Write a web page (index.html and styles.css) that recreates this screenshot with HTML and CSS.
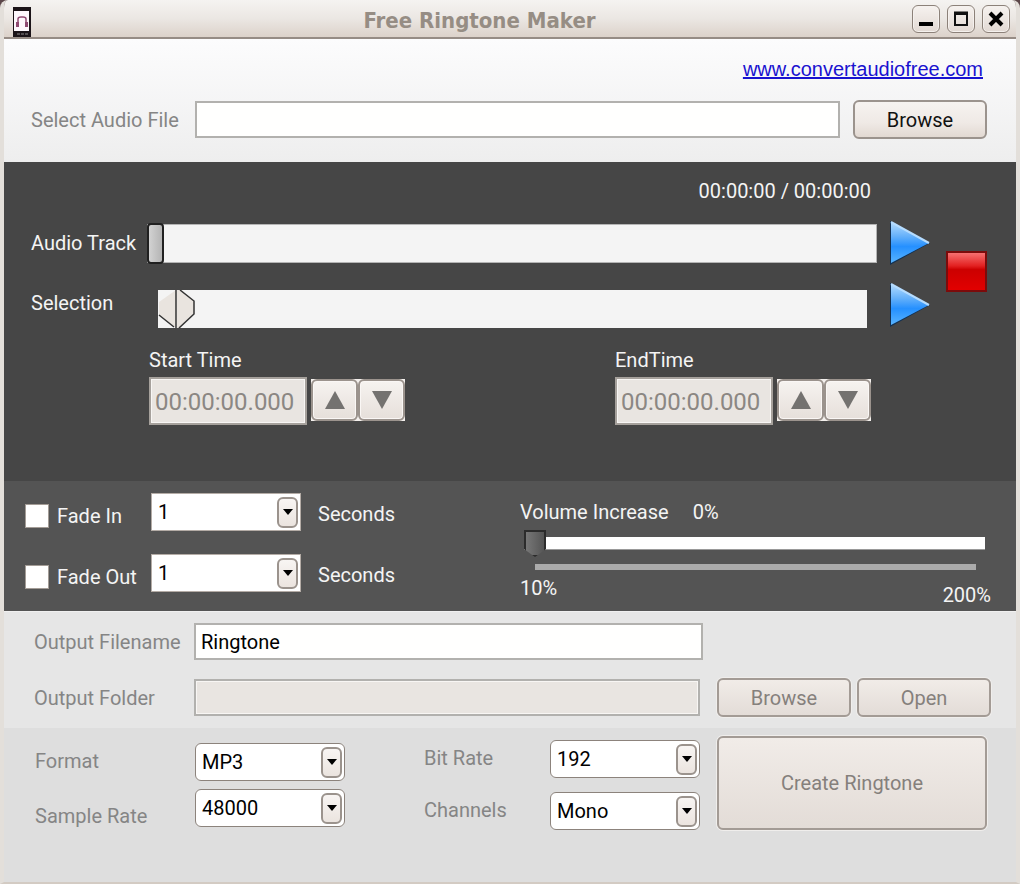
FILE: index.html
```html
<!DOCTYPE html>
<html lang="en">
<head>
    <meta charset="UTF-8">
    <meta name="viewport" content="width=device-width, initial-scale=1.0">
    <title>Free Ringtone Maker</title>
    <link rel="stylesheet" href="styles.css">
</head>
<body>
    <div class="window">
        <header class="titlebar">
            <svg class="app-icon" width="20" height="30" viewBox="0 0 20 30">
                <rect x="0" y="0" width="18" height="30" fill="#1b1418"/>
                <rect x="1" y="4" width="15" height="20" fill="#fdf7fc"/>
                <path d="M5 18 V12 Q5 10 8 10 H10 Q13 10 13 12 V18" fill="none" stroke="#8f4a72" stroke-width="1.5"/>
                <path d="M3 15h3v5h-3zM12 15h3v5h-3z" fill="#8f4a72"/>
                <path d="M4 27h3M8 27h3M12 27h3" stroke="#8d8a8b" stroke-width="1"/>
            </svg>
            <h1>Free Ringtone Maker</h1>
            <div class="window-buttons">
                <button type="button" aria-label="Minimize">
                    <svg width="16" height="16" viewBox="0 0 16 16"><path d="M1 13h14" stroke="#000" stroke-width="4"/></svg>
                </button>
                <button type="button" aria-label="Maximize">
                    <svg width="16" height="16" viewBox="0 0 16 16"><path d="M2 3h12v11h-12z" fill="none" stroke="#111" stroke-width="2"/><path d="M1 2h14" stroke="#111" stroke-width="3"/></svg>
                </button>
                <button type="button" aria-label="Close">
                    <svg width="16" height="16" viewBox="0 0 16 16"><path d="M2 2L14 14M14 2L2 14" stroke="#000" stroke-width="4"/></svg>
                </button>
            </div>
        </header>

        <!-- Source file -->
        <section class="source">
            <a class="site-link" href="#">www.convertaudiofree.com</a>
            <div class="source-row">
                <label for="audioFile">Select Audio File</label>
                <input type="text" id="audioFile" class="textbox">
                <button type="button" class="btn">Browse</button>
            </div>
        </section>

        <!-- Player -->
        <section class="player">
            <p class="position">00:00:00 / 00:00:00</p>
            <div class="tracks">
                <div class="track-list">
                    <div class="track-row">
                        <label for="audioTrack">Audio Track</label>
                        <input type="range" id="audioTrack" class="seek" min="0" max="100" value="0">
                        <button type="button" class="play" aria-label="Play track">
                            <svg width="42" height="46" viewBox="0 0 42 46">
                                <defs>
                                    <linearGradient id="blue" x1="0" y1="0" x2="0" y2="1">
                                        <stop offset="0" stop-color="#b4dcff"/>
                                        <stop offset="0.35" stop-color="#64b0fa"/>
                                        <stop offset="0.6" stop-color="#2590ff"/>
                                        <stop offset="1" stop-color="#58b4ff"/>
                                    </linearGradient>
                                </defs>
                                <path d="M1 1L41 23L1 45z" fill="#123052"/>
                                <path d="M2 2L40 23L2 43z" fill="url(#blue)"/>
                                <path d="M2 2L40 23" stroke="#b5dcff" stroke-width="2"/>
                            </svg>
                        </button>
                    </div>
                    <div class="track-row selection-row">
                        <label for="selStart">Selection</label>
                        <div class="selection">
                            <input type="range" id="selStart" class="sel-start" min="0" max="100" value="0">
                            <input type="range" class="sel-end" aria-label="Selection end" min="0" max="100" value="0">
                        </div>
                        <button type="button" class="play" aria-label="Play selection">
                            <svg width="42" height="46" viewBox="0 0 42 46">
                                <path d="M1 1L41 23L1 45z" fill="#123052"/>
                                <path d="M2 2L40 23L2 43z" fill="url(#blue)"/>
                                <path d="M2 2L40 23" stroke="#b5dcff" stroke-width="2"/>
                            </svg>
                        </button>
                    </div>
                </div>
                <button type="button" class="stop" aria-label="Stop"></button>
            </div>
            <div class="times">
                <div class="time">
                    <label for="startTime">Start Time</label>
                    <div class="time-row">
                        <input type="text" id="startTime" value="00:00:00.000" disabled>
                        <div class="spinner">
                            <button type="button" aria-label="Start later"><svg width="22" height="18" viewBox="0 0 22 18"><path d="M11 0L21 18H1z" fill="#747270"/></svg></button>
                            <button type="button" aria-label="Start earlier"><svg width="22" height="18" viewBox="0 0 22 18"><path d="M1 0H21L11 18z" fill="#747270"/></svg></button>
                        </div>
                    </div>
                </div>
                <div class="time">
                    <label for="endTime">EndTime</label>
                    <div class="time-row">
                        <input type="text" id="endTime" value="00:00:00.000" disabled>
                        <div class="spinner">
                            <button type="button" aria-label="End later"><svg width="22" height="18" viewBox="0 0 22 18"><path d="M11 0L21 18H1z" fill="#747270"/></svg></button>
                            <button type="button" aria-label="End earlier"><svg width="22" height="18" viewBox="0 0 22 18"><path d="M1 0H21L11 18z" fill="#747270"/></svg></button>
                        </div>
                    </div>
                </div>
            </div>
        </section>

        <!-- Fades and volume -->
        <section class="effects">
            <div class="fades">
                <div class="fade-row">
                    <label class="check"><input type="checkbox"> Fade In</label>
                    <div class="combo flat">
                        <select id="fadeIn" aria-label="Fade in length"><option>1</option><option>2</option><option>3</option></select>
                        <span class="arrow"></span>
                    </div>
                    <label class="unit" for="fadeIn">Seconds</label>
                </div>
                <div class="fade-row">
                    <label class="check"><input type="checkbox"> Fade Out</label>
                    <div class="combo flat">
                        <select id="fadeOut" aria-label="Fade out length"><option>1</option><option>2</option><option>3</option></select>
                        <span class="arrow"></span>
                    </div>
                    <label class="unit" for="fadeOut">Seconds</label>
                </div>
            </div>
            <div class="volume">
                <div class="volume-head">
                    <label for="volume">Volume Increase</label>
                    <output for="volume">0%</output>
                </div>
                <input type="range" id="volume" min="0" max="200" value="0">
                <div class="scale"></div>
                <div class="scale-labels">
                    <span>10%</span>
                    <span class="scale-max">200%</span>
                </div>
            </div>
        </section>

        <!-- Output -->
        <section class="output">
            <div class="output-row filename">
                <label for="fileName">Output Filename</label>
                <input type="text" id="fileName" class="textbox" value="Ringtone">
            </div>
            <div class="output-row">
                <label for="folder">Output Folder</label>
                <input type="text" id="folder" class="textbox" disabled>
                <div class="folder-buttons">
                    <button type="button" class="btn" disabled>Browse</button>
                    <button type="button" class="btn" disabled>Open</button>
                </div>
            </div>
        </section>

        <section class="encoding">
            <div class="options format">
                <div class="labels">
                    <label for="format">Format</label>
                    <label for="sampleRate">Sample Rate</label>
                </div>
                <div class="combos">
                    <div class="combo">
                        <select id="format"><option>MP3</option><option>WAV</option></select>
                        <span class="arrow"></span>
                    </div>
                    <div class="combo">
                        <select id="sampleRate"><option>48000</option><option>44100</option></select>
                        <span class="arrow"></span>
                    </div>
                </div>
            </div>
            <div class="options quality">
                <div class="labels">
                    <label for="bitRate">Bit Rate</label>
                    <label for="channels">Channels</label>
                </div>
                <div class="combos">
                    <div class="combo">
                        <select id="bitRate"><option>192</option><option>128</option></select>
                        <span class="arrow"></span>
                    </div>
                    <div class="combo">
                        <select id="channels"><option>Mono</option><option>Stereo</option></select>
                        <span class="arrow"></span>
                    </div>
                </div>
            </div>
            <button type="button" class="btn create" disabled>Create Ringtone</button>
        </section>
    </div>
</body>
</html>
```
FILE: styles.css
```css
* {
    box-sizing: border-box;
}

body {
    margin: 0;
    background: #5c474a;
    font-family: Roboto, "Liberation Sans", Arial, sans-serif;
    font-size: 20px;
    line-height: 24px;
    color: #858585;
}

input, select, button {
    font: inherit;
    margin: 0;
}

input[type="range"] {
    appearance: none;
    background: none;
}

.window {
    display: flex;
    flex-direction: column;
    min-height: 100vh;
    border: solid #e3dfda;
    border-width: 0 4px 2px;
    border-bottom-color: #d3cbc3;
    border-radius: 8px 8px 0 0;
    overflow: hidden;
}

/* Title bar */
.titlebar {
    display: flex;
    align-items: center;
    justify-content: space-between;
    height: 39px;
    margin: 0 -4px;
    padding: 2px 10px 0 13px;
    background: linear-gradient(#f5f3f1, #ebe7e3 50%, #dcd2ca);
    border-bottom: 2px solid #968c85;
}

.app-icon {
    margin-top: 5px;
}

.titlebar h1 {
    margin: 0;
    padding: 2px 0 0 14px;
    font-family: "DejaVu Sans Condensed", "DejaVu Sans", sans-serif;
    font-size: 22px;
    font-weight: bold;
    color: #968d84;
}

.window-buttons {
    display: flex;
    gap: 7px;
    margin-bottom: 2px;
}

.window-buttons button {
    display: flex;
    align-items: center;
    justify-content: center;
    width: 28px;
    height: 28px;
    padding: 0;
    border: 1px solid #8c8179;
    border-radius: 6px;
    background: linear-gradient(#f6f2ef, #e2d9d3);
    box-shadow: inset 0 0 0 1px #f5f1ee;
}

/* Source file */
.source {
    padding: 18px 29px 23px 27px;
    background: linear-gradient(#fcfcfd, #eeeeee);
}

.site-link {
    display: block;
    width: max-content;
    margin: 0 4px 19px auto;
    font-family: "Liberation Sans", Arial, sans-serif;
    color: #1912d0;
}

.source-row {
    display: flex;
    align-items: center;
}

.source-row label {
    width: 164px;
}

.source-row .btn {
    margin-left: 13px;
}

.textbox {
    flex: 1;
    min-width: 0;
    height: 37px;
    padding: 0 5px;
    border: 2px solid #b2b1ae;
    background: #fffffe;
    color: #000;
}

.textbox:disabled {
    background: #e9e5e1;
    box-shadow: inset 0 0 0 1px #f8f6f4;
}

.btn {
    width: 134px;
    height: 39px;
    padding: 0;
    border: 2px solid #9b938d;
    border-radius: 6px;
    background: linear-gradient(#f6f3f0, #efe9e5 60%, #e2d9d2);
    color: #111;
}

.btn:disabled {
    border-color: #a39b95;
    background: linear-gradient(#f1ece8, #e3dcd7);
    box-shadow: 0 0 0 1px #f0eeec;
    color: #85807c;
}

/* Player */
.player {
    padding: 17px 29px 56px 27px;
    background: #464646;
    color: #f4f4f4;
}

.position {
    margin: 0 116px 17px 0;
    text-align: right;
}

.tracks {
    display: flex;
    align-items: center;
    gap: 15px;
}

.track-list {
    flex: 1;
    display: flex;
    flex-direction: column;
    gap: 16px;
}

.track-row {
    display: flex;
    align-items: center;
}

.track-row label {
    width: 116px;
}

.selection-row label {
    padding-bottom: 4px;
}

.track-row .play {
    margin-left: 12px;
}

.play {
    padding: 0;
    border: 0;
    background: none;
}

.play svg {
    display: block;
}

.stop {
    width: 41px;
    height: 41px;
    margin-bottom: 5px;
    padding: 0;
    border: 2px solid #7c0b0b;
    background: linear-gradient(#f67070, #e22020 35%, #cc0000 45%, #e20000);
}

.seek {
    flex: 1;
    min-width: 0;
    height: 40px;
}

.seek::-webkit-slider-runnable-track {
    height: 39px;
    background: #f4f4f4;
    border: 1px solid #b4b4b4;
}

.seek::-webkit-slider-thumb {
    appearance: none;
    width: 17px;
    height: 41px;
    margin: -2px 0 0 -1px;
    border: 2px solid #202020;
    border-radius: 4px;
    background: linear-gradient(90deg, #d2d2d2, #b4b4b4);
}

/* Both handles share the same bar */
.selection {
    flex: 1;
    display: grid;
    height: 38px;
    margin: 8px 10px 0 11px;
    background: #f4f4f4;
}

.selection input {
    grid-area: 1 / 1;
    min-width: 0;
    height: 38px;
    pointer-events: none;
}

.selection input::-webkit-slider-thumb {
    appearance: none;
    width: 19px;
    height: 38px;
    border: 0;
    pointer-events: auto;
}

.sel-start::-webkit-slider-thumb {
    background: url("data:image/svg+xml,%3Csvg xmlns='http://www.w3.org/2000/svg' viewBox='0 0 19 38'%3E%3Cpath d='M18 0L1 12V25L18 38z' fill='%23e9e4df'/%3E%3Cpath d='M1 25L16 37M18 0V38' fill='none' stroke='%23333' stroke-width='1.5'/%3E%3C/svg%3E");
}

.selection .sel-end {
    margin-left: 19px;
}

.sel-end::-webkit-slider-thumb {
    background: url("data:image/svg+xml,%3Csvg xmlns='http://www.w3.org/2000/svg' viewBox='0 0 19 38'%3E%3Cpath d='M0 0H4L17 11V24L2 38H0z' fill='%23e9e4df'/%3E%3Cpath d='M3 0L17 11V24L2 38' fill='none' stroke='%23333' stroke-width='1.5'/%3E%3C/svg%3E");
}

.times {
    display: flex;
    justify-content: space-between;
    margin: 20px 116px 0 118px;
}

.time label {
    display: block;
    margin-bottom: 5px;
}

.time-row {
    display: flex;
    align-items: center;
    gap: 4px;
}

.time-row input {
    width: 158px;
    height: 48px;
    padding: 2px 4px 0;
    border: 2px solid #a6a19c;
    background: #e9e5e1;
    box-shadow: inset 0 0 0 1px #f8f6f4;
    font-size: 24px;
    color: #8b8783;
}

.spinner {
    display: flex;
    margin-bottom: 2px;
    background: #f4f0ed;
}

.spinner button {
    display: flex;
    align-items: center;
    justify-content: center;
    width: 47px;
    height: 42px;
    padding: 0;
    border: 2px solid #9b938d;
    border-radius: 6px;
    background: linear-gradient(#f6f3f0, #e6dfda);
    box-shadow: inset 0 0 0 1px #faf7f5;
}

/* Fades and volume */
.effects {
    display: flex;
    justify-content: space-between;
    padding: 12px 25px 4px 21px;
    background: #545454;
    color: #f4f4f4;
}

.fades {
    display: flex;
    flex-direction: column;
    gap: 23px;
}

.fade-row {
    display: flex;
    align-items: center;
}

.fade-row .combo {
    margin-right: 17px;
}

.fade-row .unit {
    padding-top: 4px;
}

.check {
    display: flex;
    align-items: center;
    gap: 8px;
    width: 126px;
    padding-top: 7px;
}

.check input {
    appearance: none;
    width: 24px;
    height: 24px;
    border: 1px solid #a39c96;
    background: #fff;
}

.check input:checked {
    box-shadow: inset 0 0 0 5px #fff;
    background: #333;
}

.combo {
    position: relative;
    width: 150px;
}

.combo select {
    appearance: none;
    display: block;
    width: 100%;
    height: 38px;
    padding: 0 32px 0 6px;
    border: 1px solid #8c837c;
    border-radius: 6px;
    background: #fff;
    color: #000;
}

.combo.flat select {
    border-color: #b4aca6;
    border-radius: 0;
}

.arrow {
    position: absolute;
    top: 4px;
    right: 3px;
    width: 21px;
    height: 31px;
    border: 2px solid #9b938d;
    border-radius: 6px;
    background: linear-gradient(#f8f5f3, #ebe4df);
    pointer-events: none;
}

.arrow::after {
    content: "";
    position: absolute;
    top: 10px;
    left: 4px;
    border: 5px solid transparent;
    border-top: 6px solid #000;
    border-bottom: 0;
}

.volume {
    width: 471px;
    padding-top: 7px;
}

.volume-head {
    display: flex;
    gap: 24px;
    margin-bottom: 6px;
}

.volume input {
    display: block;
    width: calc(100% - 6px);
    height: 27px;
    padding-left: 4px;
}

.volume input::-webkit-slider-runnable-track {
    height: 13px;
    background: #fff;
    border-bottom: 1px solid #999;
}

.volume input::-webkit-slider-thumb {
    appearance: none;
    width: 22px;
    height: 27px;
    margin-top: -7px;
    border: 2px solid #2c2c2c;
    background: linear-gradient(90deg, #777, #555);
    clip-path: polygon(0 0, 100% 0, 100% 70%, 50% 100%, 0 70%);
}

.scale {
    height: 6px;
    margin: 7px 15px 6px 15px;
    background: #ababab;
}

.scale-labels {
    display: flex;
    justify-content: space-between;
}

.scale-max {
    padding-top: 7px;
}

/* Output */
.output {
    padding: 11px 25px 11px 30px;
    background: #e6e6e6;
    border-top: 1px solid #f0f0f0;
}

.output-row {
    display: flex;
    align-items: center;
}

.output-row label {
    width: 160px;
}

.filename {
    margin: 0 288px 18px 0;
}

.folder-buttons {
    display: flex;
    gap: 6px;
    margin-left: 17px;
}

.encoding {
    flex: 1;
    display: flex;
    align-items: flex-start;
    padding: 8px 29px 8px 31px;
    background: #dedede;
}

.options {
    display: flex;
}

.labels {
    display: flex;
    flex-direction: column;
}

.combos {
    display: flex;
    flex-direction: column;
}

.format {
    margin: 7px auto 0 0;
}

.format .labels {
    gap: 31px;
    width: 160px;
    padding-top: 6px;
}

.format .combos {
    gap: 8px;
}

.quality {
    margin: 4px 17px 0 0;
}

.quality .labels {
    gap: 28px;
    width: 126px;
    padding-top: 6px;
}

.quality .combos {
    gap: 14px;
}

.create {
    width: 270px;
    height: 94px;
}
```
